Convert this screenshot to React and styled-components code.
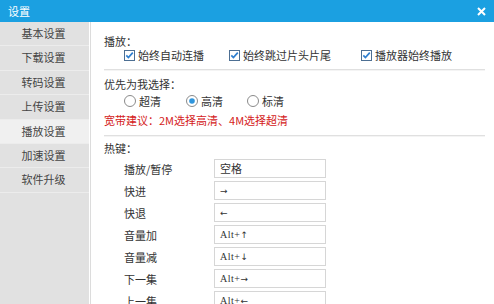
import React from 'react';
import styled, { createGlobalStyle } from 'styled-components';

const GlobalStyle = createGlobalStyle`
  html, body {
    margin: 0;
    padding: 0;
    background: #ffffff;
  }
  body {
    font-family: "Noto Sans CJK SC", "Liberation Sans", sans-serif;
    font-size: 11px;
    color: #333333;
  }
`;

const menu = ['基本设置', '下载设置', '转码设置', '上传设置', '播放设置', '加速设置', '软件升级'];

const hotkeys = [
  { label: '播放/暂停', text: '空格', cjk: true },
  { label: '快进', arrow: '→' },
  { label: '快退', arrow: '←' },
  { label: '音量加', text: 'Alt+', arrow: '↑' },
  { label: '音量减', text: 'Alt+', arrow: '↓' },
  { label: '下一集', text: 'Alt+', arrow: '→' },
  { label: '上一集', text: 'Alt+', arrow: '←' },
];

const CheckIcon = () => (
  <svg width="11" height="11" viewBox="0 0 11 11">
    <rect x="0.5" y="0.5" width="10" height="10" fill="#fff" stroke="#4d6f93" />
    <path d="M2.3 5.4 L4.4 7.6 L8.8 2.6" fill="none" stroke="#2f7fd0" strokeWidth="1.7" />
  </svg>
);

const RadioIcon = ({ checked }) => (
  <svg width="12" height="12" viewBox="0 0 12 12">
    <circle cx="6" cy="6" r="5.5" fill="#fff" stroke="#8a8a8a" />
    {checked && <circle cx="6" cy="6" r="2.8" fill="#2f95dc" />}
  </svg>
);

const App = () => {
  return (
    <>
      <GlobalStyle />
      <Window>
        <TitleBar>
          <Title>设置</Title>
          <svg width="9" height="9" viewBox="0 0 9 9">
            <path d="M1 1 L8 8 M8 1 L1 8" stroke="#fff" strokeWidth="2" />
          </svg>
        </TitleBar>
        <Body>
          <Sidebar>
            {menu.map((m) => (
              <MenuItem key={m} active={m === '播放设置'}>
                {m}
              </MenuItem>
            ))}
          </Sidebar>
          <Content>
            <Label top={12}>播放：</Label>
            <OptionRow>
              <Option width={105}>
                <CheckIcon />
                始终自动连播
              </Option>
              <Option width={132}>
                <CheckIcon />
                始终跳过片头片尾
              </Option>
              <Option>
                <CheckIcon />
                播放器始终播放
              </Option>
            </OptionRow>
            <Divider top={7} />
            <Label top={7}>优先为我选择：</Label>
            <OptionRow top={2}>
              <Option width={62}>
                <RadioIcon />
                超清
              </Option>
              <Option width={61}>
                <RadioIcon checked />
                高清
              </Option>
              <Option>
                <RadioIcon />
                标清
              </Option>
            </OptionRow>
            <Hint>宽带建议：2M选择高清、4M选择超清</Hint>
            <Divider top={8} />
            <Label top={5}>热键：</Label>
            <KeyList>
              {hotkeys.map((k) => (
                <KeyRow key={k.label}>
                  <KeyLabel>{k.label}</KeyLabel>
                  <KeyInput cjk={k.cjk}>
                    {k.text}
                    {k.arrow && <Arrow>{k.arrow}</Arrow>}
                  </KeyInput>
                </KeyRow>
              ))}
            </KeyList>
          </Content>
        </Body>
      </Window>
    </>
  );
};

const Window = styled.div`
  width: 494px;
  height: 304px;
  overflow: hidden;
  display: flex;
  flex-direction: column;
`;
const TitleBar = styled.div`
  height: 22px;
  flex: none;
  background-color: #1ba0e1;
  display: flex;
  align-items: center;
  justify-content: space-between;
  padding: 0 8px 0 8px;
`;
const Title = styled.span`
  color: #ffffff;
  font-size: 11px;
`;
const Body = styled.div`
  flex: 1;
  display: flex;
  min-height: 0;
`;
const Sidebar = styled.div`
  width: 89px;
  flex: none;
  background-color: #e1e1e1;
  border-right: 1px solid #ffffff;
  box-shadow: 1px 0 0 #dcdcdc;
`;
const MenuItem = styled.div`
  height: 23.4px;
  line-height: 23px;
  text-align: center;
  padding-right: 2px;
  color: #444444;
  border-bottom: 1px solid #ececec;
  background-color: ${(props) => (props.active ? '#f0f0f0' : 'transparent')};
`;
const Content = styled.div`
  flex: 1;
  padding: 0 9px 0 13px;
  margin-left: 1px;
`;
const Label = styled.div`
  height: 14px;
  line-height: 14px;
  margin-top: ${(props) => props.top || 0}px;
`;
const OptionRow = styled.div`
  display: flex;
  align-items: center;
  padding-left: 20px;
  margin-top: ${(props) => props.top || 0}px;
  height: ${(props) => (props.top ? 16 : 14)}px;
`;
const Option = styled.div`
  display: flex;
  align-items: center;
  gap: 3px;
  width: ${(props) => (props.width ? `${props.width}px` : 'auto')};
  line-height: 14px;
`;
const Hint = styled.div`
  margin-top: 4px;
  height: 14px;
  line-height: 14px;
  color: #d42121;
`;
const Divider = styled.div`
  height: 1px;
  background-color: #e0e0e0;
  box-shadow: 0 1px 0 #f4f4f4;
  margin-top: ${(props) => props.top || 0}px;
`;
const KeyList = styled.div`
  margin-top: 4px;
  padding-left: 20px;
  display: flex;
  flex-direction: column;
  gap: 3px;
`;
const KeyRow = styled.div`
  display: flex;
  align-items: center;
  height: 19px;
`;
const KeyLabel = styled.span`
  width: 90px;
`;
const KeyInput = styled.div`
  width: 112px;
  height: 19px;
  box-sizing: border-box;
  border: 1px solid #d6d6d6;
  padding-left: 5px;
  line-height: 17px;
  font-family: ${(props) =>
    props.cjk ? '"Noto Sans CJK SC", sans-serif' : '"Liberation Serif", serif'};
  font-size: ${(props) => (props.cjk ? 11 : 10)}px;
  letter-spacing: ${(props) => (props.cjk ? 0 : 0.5)}px;
  color: #333333;
`;
const Arrow = styled.span`
  font-family: "DejaVu Sans", sans-serif;
  font-size: 9px;
  letter-spacing: 0;
`;

export default App;
